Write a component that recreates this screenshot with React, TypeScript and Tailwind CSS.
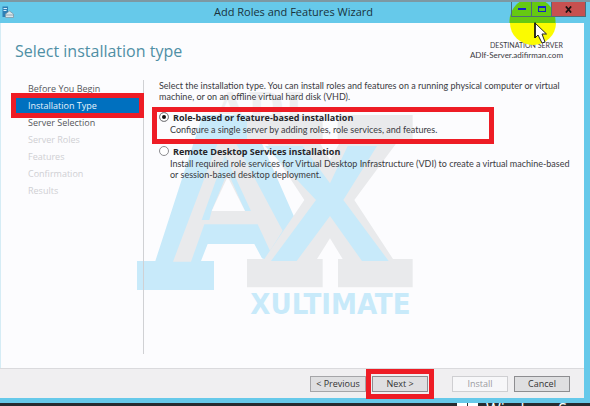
import clsx from "clsx"

const steps = [
  { label: "Before You Begin", state: "done" },
  { label: "Installation Type", state: "active" },
  { label: "Server Selection", state: "done" },
  { label: "Server Roles", state: "disabled" },
  { label: "Features", state: "disabled" },
  { label: "Confirmation", state: "disabled" },
  { label: "Results", state: "disabled" },
]

const options = [
  {
    id: "role-based",
    title: "Role-based or feature-based installation",
    text: "Configure a single server by adding roles, role services, and features.",
    marked: true,
  },
  {
    id: "remote-desktop",
    title: "Remote Desktop Services installation",
    text: "Install required role services for Virtual Desktop Infrastructure (VDI) to create a virtual machine-based or session-based desktop deployment.",
    marked: false,
  },
]

function WizardIcon() {
  return (
    <svg viewBox="0 0 12 12" className="h-3 w-3" aria-hidden="true">
      <path d="M0.5 0.500H6v10.500H0.500z" fill="#2f7fb5" />
      <path d="M1.5 2.500h3.500M1.500 4.500h3" stroke="#d7eefa" strokeWidth="1" />
      <path d="M3.500 8 7.500 5l4 3v3.500h-8z" fill="#dbe6ec" stroke="#7d9aa8" strokeWidth="0.8" />
      <path d="M4 9h7.500" fill="none" stroke="#7d9aa8" strokeWidth="0.8" />
    </svg>
  )
}

function Watermark() {
  return (
    <svg
      viewBox="0 0 930 750"
      className="pointer-events-none absolute left-[120px] top-[57px] -z-10 h-[250px] w-[310px]"
      aria-hidden="true"
    >
      <text x="278" y="128" fontSize="128" fill="#eeeff1" fontWeight="700" fontFamily="'DejaVu Serif', serif">
        ADI
      </text>
      {/* letter A */}
      <path d="M245 105H385L520 412 445 543 423 535 400 492H260L240 543H279V630H48V543H103Z" fill="#c8eafa" />
      <path d="M290 190H345L485 452 447 512 410 433H250L210 545H156Z" fill="#e9eaec" />
      <path d="M312 225 390 393H372L320 275 272 393 265 420H242Z" fill="#c8eafa" />
      <path d="M320 290 372 393H272Z" fill="#fcfcfe" />
      {/* letter X */}
      <path
        d="M378 105H605V178H590L627 240 662 178H650V105H875V178H835L700 360 816 537H875V622H651V537H665L627 475 588 537H605V622H378V537H430L550 360 430 178H378Z"
        fill="#e9eaec"
      />
      <path d="M432 198H545L627 310 680 198H768L667 360 803 543H723L627 408 527 543H450L585 360Z" fill="#c8eafa" />
      <text
        x="388"
        y="702"
        fontSize="87"
        fill="#c8eafa"
        fontWeight="700"
        fontFamily="'Liberation Sans Narrow', 'DejaVu Sans Condensed', sans-serif"
      >
        XULTIMATE
      </text>
    </svg>
  )
}

function TitleBar() {
  return (
    <header className="relative z-10 flex h-[23px] items-start border-t-2 border-[#7d98a3] bg-[#66c9ea]">
      <div className="absolute left-[2px] top-1">
        <WizardIcon />
      </div>
      <h1 className="flex-1 pl-[76px] text-center text-[11px] leading-5 text-[#18323c]">Add Roles and Features Wizard</h1>
      <div className="mr-1 flex h-[15px] border border-t-0 border-[#4d6c78]">
        <button aria-label="Minimize" className="flex w-5 items-center justify-center border-r border-[#4d6c78]">
          <span className="h-[2px] w-2 bg-[#1420c8]" />
        </button>
        <button aria-label="Maximize" className="flex w-5 items-center justify-center border-r border-[#4d6c78]">
          <span className="h-[6px] w-2 border border-t-2 border-[#1420c8]" />
        </button>
        <button aria-label="Close" className="flex w-[33px] items-center justify-center bg-[#c75050]">
          <svg viewBox="0 0 8 8" className="h-[7px] w-[7px]">
            <path d="M1 0.5 7 7.500M7 0.500 1 7.500" stroke="#1d1010" strokeWidth="2" />
          </svg>
        </button>
      </div>
      {/* pointer highlight, yellow over the page and green over the bar */}
      <svg viewBox="0 0 47 45" className="absolute -top-[2px] right-[34px] -z-10 h-[45px] w-[47px]" aria-hidden="true">
        <clipPath id="bar">
          <path d="M0 2h47v21H0z" />
        </clipPath>
        <path d="M1 23h46a23 22 0 0 1-46 0z" fill="#fbfb00" />
        <circle cx="23.500" cy="21" r="23" fill="#66c912" clipPath="url(#bar)" />
      </svg>
      <svg viewBox="0 0 13 22" className="absolute right-[43px] top-5 h-[22px] w-[13px]" aria-hidden="true">
        <path d="M1 1v15l3-3 4 8 3-1-3-8h4.500z" fill="#fff" stroke="#222" strokeWidth="1" />
        <path d="M1 0.500v15.500" stroke="#111" strokeWidth="1.500" />
      </svg>
    </header>
  )
}

function Highlight({ className }: { className: string }) {
  return <span className={clsx("pointer-events-none absolute border-5 border-[#ee1c25]", className)} />
}

export default function App() {
  const button = "h-4 w-14 border text-[9px] leading-3"

  return (
    <div className="flex min-h-screen flex-col bg-[#66c9ea] font-['Open_Sans',sans-serif] text-[#3a3a3e]">
      <TitleBar />

      <main className="relative isolate mr-[6px] flex flex-1 flex-col border-l border-[#d5ecf5] bg-[#fcfcfe]">
        <Watermark />
        <div className="flex h-[57px] justify-between pl-[14px] pr-[21px] pt-4">
          <h2 className="text-[16px] leading-6 text-[#4f8fa5]">Select installation type</h2>
          <div className="pt-px text-right font-['Lato',sans-serif] leading-[10px]">
            <p className="text-[7px] leading-[10px]">DESTINATION SERVER</p>
            <p className="text-[8px] leading-[10px]">ADIf-Server.adifirman.com</p>
          </div>
        </div>

        <div className="flex flex-1 pb-[14px]">
          <nav className="w-[143px] shrink-0 border-r border-[#d0d1d4] pl-[15px] pr-1">
            <ul className="text-[9px] leading-[17px]">
              {steps.map((step) => (
                <li key={step.label} className="relative">
                  <a
                    href="#"
                    className={clsx(
                      "block pl-3",
                      step.state === "active" && "bg-[#0070bf] text-[#e6f3fb]",
                      step.state === "done" && "text-[#55565a]",
                      step.state === "disabled" && "text-[#cfcfd3]",
                    )}
                  >
                    {step.label}
                  </a>
                  {step.state === "active" && <Highlight className="-inset-x-[5px] -inset-y-1" />}
                </li>
              ))}
            </ul>
          </nav>

          <form className="flex-1 pl-[15px] pr-[10px] text-[9px] leading-[11px]">
            <p className="font-['Lato',sans-serif]">
              Select the installation type. You can install roles and features on a running physical computer or virtual
              machine, or on an offline virtual hard disk (VHD).
            </p>
            <div className="mt-2 flex flex-col gap-[9px]">
              {options.map((option) => (
                <div key={option.id} className="relative">
                  <label htmlFor={option.id} className="flex h-[14px] items-center gap-1 font-bold text-[#26262a]">
                    <input
                      id={option.id}
                      type="radio"
                      name="installation-type"
                      defaultChecked={option.marked}
                      className="h-[10px] w-[10px] appearance-none rounded-full border border-[#8c8c90] bg-white checked:bg-[#111] checked:shadow-[inset_0_0_0_2px_white]"
                    />
                    {option.title}
                  </label>
                  <p className="pl-[11px] font-['Lato',sans-serif]">{option.text}</p>
                  {option.marked && <Highlight className="-left-[7px] -top-[3px] h-[37px] w-[342px]" />}
                </div>
              ))}
            </div>
          </form>
        </div>
      </main>

      <footer className="mr-[6px] flex h-[30px] items-center justify-end border-t border-[#dadadd] bg-[#f0eff1] pr-[14px] text-[#333]">
        <button className={clsx(button, "border-[#a5a5a8] bg-[#dfdfe1]")}>&lt; Previous</button>
        <div className="relative ml-[6px] flex">
          <button className={clsx(button, "border-[#8d8d90] bg-[#dfdfe1]")}>Next &gt;</button>
          <Highlight className="-inset-x-[6px] -inset-y-[7px]" />
        </div>
        <button disabled className={clsx(button, "ml-6 border-[#cfcfd2] bg-[#f7f7f9] text-[#9b9b9f]")}>
          Install
        </button>
        <button className={clsx(button, "ml-[6px] border-[#8d8d90] bg-[#dfdfe1]")}>Cancel</button>
      </footer>
      <div className="mt-[5px] flex h-[3px] justify-end overflow-hidden bg-[#272b30] text-[16px] leading-[12px] text-white">
        <div className="flex w-[133px] gap-2 whitespace-nowrap">
          <span className="flex gap-px">
            <span className="w-[10px] bg-white" />
            <span className="w-[10px] bg-white" />
          </span>
          <span>Windows Server</span>
        </div>
      </div>
    </div>
  )
}
